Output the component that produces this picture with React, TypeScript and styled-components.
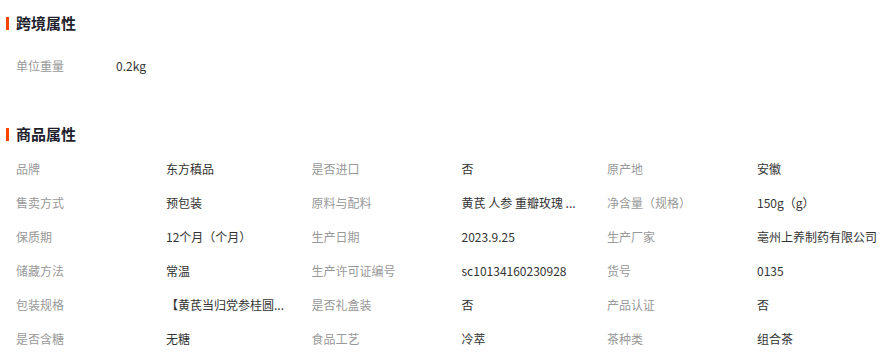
import React from 'react';
import styled, {createGlobalStyle} from 'styled-components';

const GlobalStyle = createGlobalStyle`
  body {
    margin: 0;
    background: #fff;
    font-family: "Microsoft YaHei", "Noto Sans CJK SC", "Noto Sans", sans-serif;
  }
`

type AttrType = {
    label: string
    value: string
}

const crossBorder: AttrType[] = [
    {label: '单位重量', value: '0.2kg'},
]

// values that are cut in the shop page are stored already shortened
const goods: AttrType[] = [
    {label: '品牌', value: '东方稹品'},
    {label: '是否进口', value: '否'},
    {label: '原产地', value: '安徽'},
    {label: '售卖方式', value: '预包装'},
    {label: '原料与配料', value: '黄芪 人参 重瓣玫瑰 ...'},
    {label: '净含量（规格）', value: '150g（g）'},
    {label: '保质期', value: '12个月（个月）'},
    {label: '生产日期', value: '2023.9.25'},
    {label: '生产厂家', value: '亳州上养制药有限公司'},
    {label: '储藏方法', value: '常温'},
    {label: '生产许可证编号', value: 'sc10134160230928'},
    {label: '货号', value: '0135'},
    {label: '包装规格', value: '【黄芪当归党参桂圆...'},
    {label: '是否礼盒装', value: '否'},
    {label: '产品认证', value: '否'},
    {label: '是否含糖', value: '无糖'},
    {label: '食品工艺', value: '冷萃'},
    {label: '茶种类', value: '组合茶'},
]

export default function App() {
    return (
        <Page>
            <GlobalStyle/>
            <Section>
                <Title>跨境属性</Title>
                <SimpleList>
                    {crossBorder.map(a => (
                        <Item key={a.label}>
                            <Label width={100}>{a.label}</Label>
                            <Value>{a.value}</Value>
                        </Item>
                    ))}
                </SimpleList>
            </Section>
            <Section gap={7}>
                <Title>商品属性</Title>
                <Grid>
                    {goods.map(a => (
                        <Item key={a.label}>
                            <Label width={150}>{a.label}</Label>
                            <Value>{a.value}</Value>
                        </Item>
                    ))}
                </Grid>
            </Section>
        </Page>
    );
}

const Page = styled.div`
  width: 891px;
  height: 360px;
  overflow: hidden;
  padding-top: 13px;
  box-sizing: border-box;
`
const Section = styled.section<{gap?: number}>`
  display: flex;
  flex-direction: column;
  gap: ${p => p.gap ?? 15}px;
  & + & {
    margin-top: 42px;
  }
`
const Title = styled.h3`
  position: relative;
  margin: 0;
  padding-left: 16px;
  height: 20px;
  line-height: 20px;
  font-size: 15px;
  font-weight: bold;
  color: #1f1f2e;
  &::before {
    content: "";
    position: absolute;
    left: 6px;
    top: 4px;
    width: 3px;
    height: 13px;
    background: #ff4400;
  }
`
const SimpleList = styled.div`
  padding-left: 16px;
`
const Grid = styled.div`
  display: grid;
  grid-template-columns: repeat(3, 295.5px);
  padding-left: 16px;
`
const Item = styled.div`
  display: flex;
  height: 34px;
  align-items: center;
  font-size: 12px;
`
const Label = styled.span<{width: number}>`
  flex-shrink: 0;
  width: ${p => p.width}px;
  color: #999;
  white-space: nowrap;
`
const Value = styled.span`
  color: #333;
  white-space: nowrap;
`
